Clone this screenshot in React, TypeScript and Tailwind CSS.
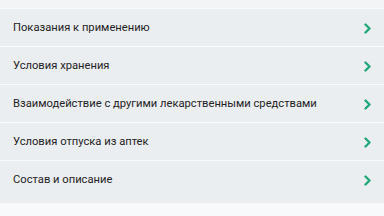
const items = [
  'Показания к применению',
  'Условия хранения',
  'Взаимодействие с другими лекарственными средствами',
  'Условия отпуска из аптек',
  'Состав и описание',
];

function Chevron() {
  return (
    <svg width="8" height="11" viewBox="0 0 8 11" className="text-[#22a77a]">
      <polyline
        points="1.5,1.5 5.5,5.5 1.5,9.5"
        fill="none"
        stroke="currentColor"
        strokeWidth="2.4"
        strokeLinecap="round"
        strokeLinejoin="round"
      />
    </svg>
  );
}

export default function App() {
  return (
    <div className="w-[384px] h-[216px] bg-[#f7f9fa] font-['Roboto',sans-serif] overflow-hidden">
      <div className="h-[8px] bg-[#f2f4f6]" />
      <div className="bg-[#ebeef1] pb-[5px]">
        {items.map((label) => (
          <div
            key={label}
            className="h-[38px] border-t border-white/70 flex items-center justify-between pl-[13px] pr-[12px] pt-[2px]"
          >
            <span className="text-[11.2px] text-[#1f2224]">{label}</span>
            <Chevron />
          </div>
        ))}
      </div>
    </div>
  );
}
